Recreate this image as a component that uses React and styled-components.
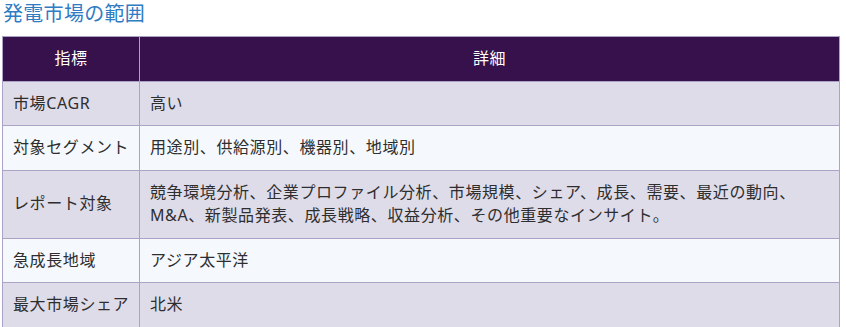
import styled, { createGlobalStyle } from 'styled-components';

const GlobalStyle = createGlobalStyle`
  body {
    margin: 0;
    background: #fff;
    font-family: "Noto Sans", "Noto Sans CJK JP", sans-serif;
  }
`;

const ROWS = [
  { label: '市場CAGR', detail: '高い' },
  { label: '対象セグメント', detail: '用途別、供給源別、機器別、地域別' },
  {
    label: 'レポート対象',
    detail:
      '競争環境分析、企業プロファイル分析、市場規模、シェア、成長、需要、最近の動向、M&A、新製品発表、成長戦略、収益分析、その他重要なインサイト。'
  },
  { label: '急成長地域', detail: 'アジア太平洋' },
  { label: '最大市場シェア', detail: '北米' }
];

export default function App() {
  return (
    <>
      <GlobalStyle />
      <Section>
        <Title>発電市場の範囲</Title>
        <Table>
          <thead>
            <tr>
              <HeadCell $width="116px">指標</HeadCell>
              <HeadCell>詳細</HeadCell>
            </tr>
          </thead>
          <tbody>
            {ROWS.map((row, i) => (
              <Row key={row.label} $striped={i % 2 === 0}>
                <Cell $nowrap>{row.label}</Cell>
                <Cell>{row.detail}</Cell>
              </Row>
            ))}
          </tbody>
        </Table>
      </Section>
    </>
  );
}

const Section = styled.section`
  padding: 2px 2px 0;
`;

const Title = styled.h3`
  margin: 0 0 10px 1px;
  font-size: 20px;
  font-weight: 400;
  line-height: 24px;
  letter-spacing: 0.3px;
  color: #2f7cc3;
`;

const Table = styled.table`
  width: 838px;
  border-collapse: collapse;
  table-layout: fixed;
  font-size: 16px;
  line-height: 23.5px;
  letter-spacing: 0.6px;
  color: #2e2e2e;
  border: 1px solid #aaa3c6;
`;

const HeadCell = styled.th`
  width: ${({ $width }) => $width || 'auto'};
  padding: 10px;
  background: #37114b;
  color: #fff;
  font-weight: 400;
  text-align: center;
  border: 1px solid #aaa3c6;
`;

const Row = styled.tr`
  background: ${({ $striped }) => ($striped ? '#dfdcea' : '#f5f9fd')};
`;

const Cell = styled.td`
  padding: 10px;
  border: 1px solid #aaa3c6;
  vertical-align: middle;
  white-space: ${({ $nowrap }) => ($nowrap ? 'nowrap' : 'normal')};
`;
